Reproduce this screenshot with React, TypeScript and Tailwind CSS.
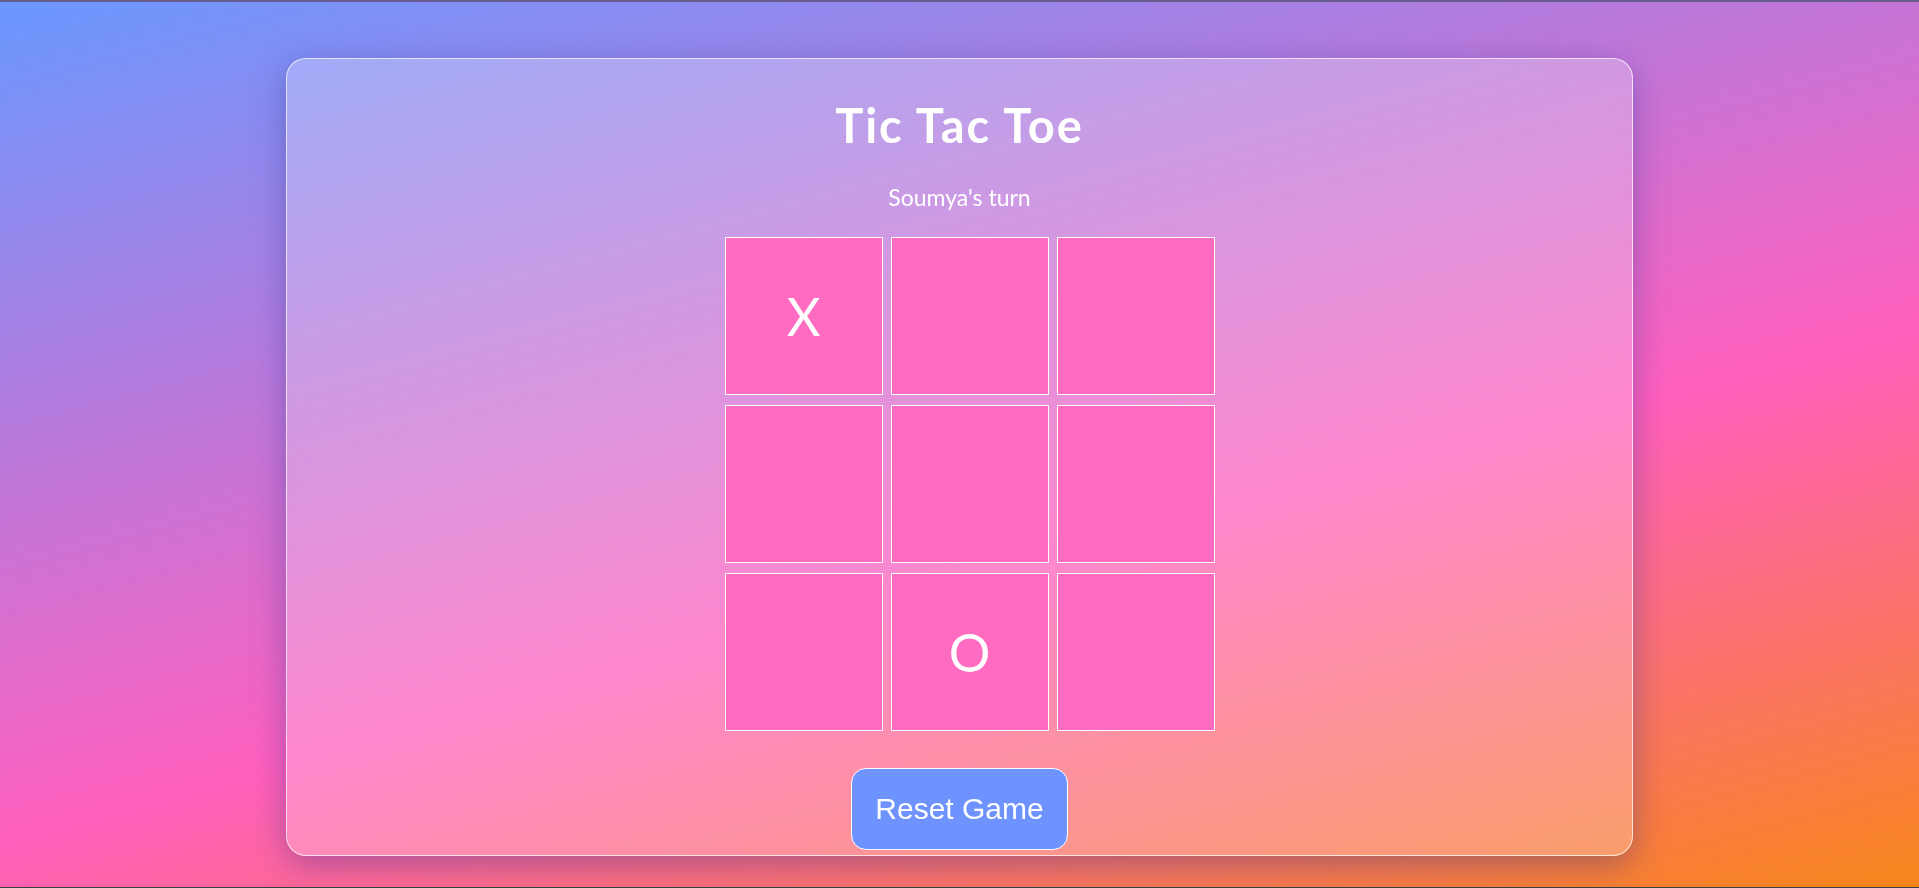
import { useState } from "react";

type Mark = "X" | "O" | null;

const players = { X: "Soumya", O: "Rahul" };

function Cell({ value, onClick }: { value: Mark; onClick: () => void }) {
  return (
    <button
      onClick={onClick}
      className="w-[158px] h-[158px] border border-white bg-[#ff6bc1] flex items-center justify-center text-white text-[52px] leading-none font-normal font-['Lato',sans-serif] cursor-pointer"
    >
      {value}
    </button>
  );
}

export default function App() {
  const [board, setBoard] = useState<Mark[]>(["X", null, null, null, null, null, null, "O", null]);
  const [next, setNext] = useState<"X" | "O">("X");

  const play = (i: number) => {
    if (board[i]) return;
    const copy = [...board];
    copy[i] = next;
    setBoard(copy);
    setNext(next === "X" ? "O" : "X");
  };

  const reset = () => {
    setBoard(Array(9).fill(null));
    setNext("X");
  };

  return (
    <div className="h-screen overflow-hidden border-t-2 border-b border-t-[#685b8e] border-b-[#3c3c3c] bg-[linear-gradient(165deg,#6a98ff_0%,#ff5fbd_60%,#f7851a_100%)] font-['Lato',sans-serif]">
      <div className="pt-[56px]">
        <div className="mx-auto w-[1347px] h-[798px] rounded-[20px] border border-white/70 bg-white/25 backdrop-blur-sm shadow-[0_8px_32px_0_rgba(31,38,135,0.37)] flex flex-col items-center pt-[43px]">
          <h1 className="text-white text-[47px] leading-none font-bold tracking-[2px]">Tic Tac Toe</h1>
          <p className="mt-[37px] text-white text-[23px] leading-none">{players[next]}'s turn</p>
          <div className="mt-[28px] ml-[20px] grid grid-cols-3 gap-x-[8px] gap-y-[10px]">
            {board.map((v, i) => (
              <Cell key={i} value={v} onClick={() => play(i)} />
            ))}
          </div>
          <button
            onClick={reset}
            className="mt-[37px] px-[23px] py-[23px] rounded-[15px] border border-white bg-[#6e93ff] text-white text-[30px] leading-[34px] font-['Liberation_Sans',Arial,sans-serif] cursor-pointer"
          >
            Reset Game
          </button>
        </div>
      </div>
    </div>
  );
}
